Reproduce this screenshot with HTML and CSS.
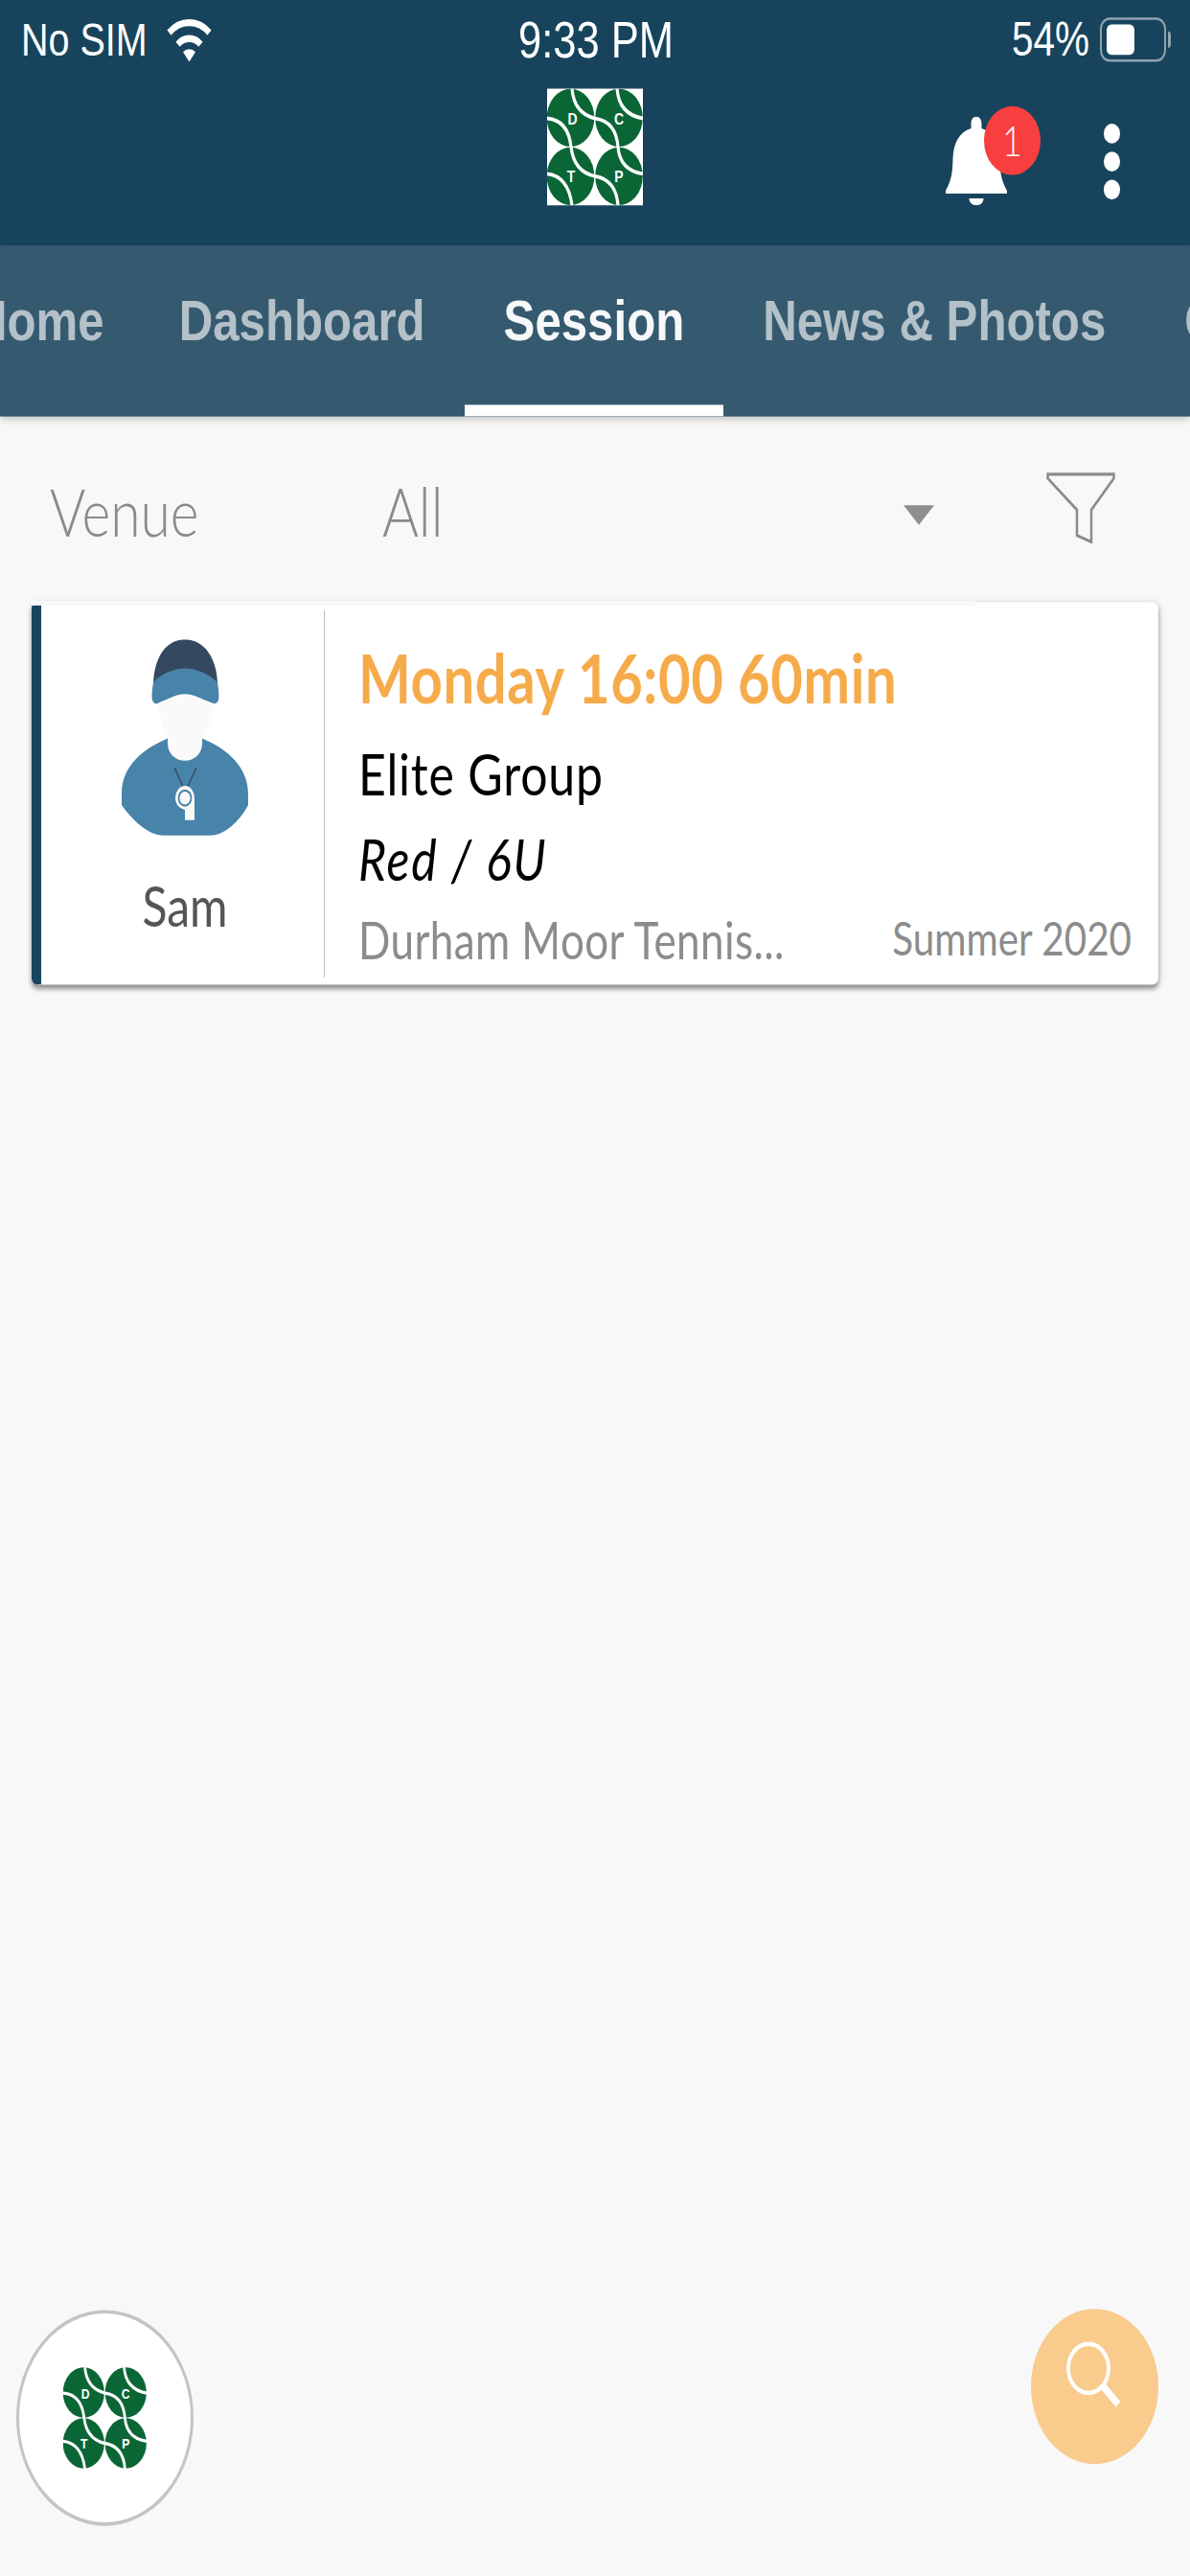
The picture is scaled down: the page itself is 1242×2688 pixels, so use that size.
FILE: index.html
```html
<!DOCTYPE html>
<html lang="en">
<head>
<meta charset="utf-8">
<title>Session</title>
<link rel="stylesheet" href="styles.css">
</head>
<body>
<div class="stage">
  <header class="appbar">
    <div class="status">
      <div class="status-left">
        <span>No SIM</span>
        <svg class="wifi" viewBox="0 0 49 37">
          <path d="M24.500 37L18 28.500A10 10 0 0 1 31 28.500Z" fill="#fff"/>
          <g fill="none" stroke="#fff" stroke-width="6">
            <path d="M12.500 22A17 17 0 0 1 36.500 22"/>
            <path d="M3.500 12A30 30 0 0 1 45.500 12"/>
          </g>
        </svg>
      </div>
      <div class="status-time">9:33 PM</div>
      <div class="status-right">
        <span>54%</span>
        <div class="battery"><div class="battery-fill"></div></div>
        <div class="battery-cap"></div>
      </div>
    </div>
    <div class="toolbar">
      <div></div>
      <svg class="logo" viewBox="0 0 100 100">
        <circle cx="24.500" cy="25" r="24.800" fill="#0b6636"/>
        <circle cx="75" cy="25" r="24.800" fill="#0b6636"/>
        <circle cx="24.500" cy="75" r="24.800" fill="#0b6636"/>
        <circle cx="75" cy="75" r="24.800" fill="#0b6636"/>
        <g fill="none" stroke="#fff" stroke-width="3.200">
          <path d="M26 0Q28 21 50 25.500Q72 28 74 50Q76 70 100 73"/>
          <path d="M0 25.500Q22 27 25 50Q28 71 50 75Q72 78 74 100"/>
          <path d="M73 0Q75 22 100 25.500"/>
          <path d="M0 73Q22 75 26 100"/>
        </g>
        <g class="logo-letters">
          <text x="26.500" y="31">D</text>
          <text x="75" y="31">C</text>
          <text x="25" y="80">T</text>
          <text x="75" y="80">P</text>
        </g>
      </svg>
      <div class="actions">
        <div class="bell-wrap">
          <svg class="bell" viewBox="0 0 64 76">
            <path fill="#fff" d="M32 0c3.500 0 5.500 2.800 5.500 6v4C50 13 56 23 56.500 36c.4 11 1 18 7.500 27.500V66H0v-2.500C6.500 54 7.100 47 7.500 36 8 23 14 13 26.500 10V6C26.500 2.800 28.500 0 32 0z"/>
            <path fill="#fff" d="M24.500 70h15c0 3.500-3.300 6-7.500 6s-7.500-2.500-7.500-6z"/>
          </svg>
          <div class="badge">1</div>
        </div>
        <div class="dots"><i></i><i></i><i></i></div>
      </div>
    </div>
  </header>

  <nav class="tabs">
    <a class="tab">Home</a>
    <a class="tab">Dashboard</a>
    <a class="tab tab-active">Session</a>
    <a class="tab">News &amp; Photos</a>
    <a class="tab">Coaches</a>
  </nav>

  <main class="content">
    <div class="filters">
      <span class="filter-label">Venue</span>
      <div class="filter-select">
        <span>All</span>
        <i class="caret"></i>
      </div>
      <svg class="funnel" viewBox="0 0 72 62" preserveAspectRatio="none">
        <path d="M1.500 2.500H70.500V6L47 33V60.500L32 55V33L1.500 6Z" fill="none" stroke="#8c8c8c" stroke-width="2.500"/>
      </svg>
    </div>

    <article class="card">
      <div class="coach">
        <svg class="avatar" viewBox="0 0 132 172">
          <path fill="#34495f" d="M33 40C33 16 46 0 66 0s34 16 34 40z"/>
          <path fill="#4883aa" d="M33 37C40 30 54 25 66 25s26 5 34 12c1 5 2 11 1 15-1 3-5 4-9 2-9-3-17-7-26-7s-17 4-26 7c-4 2-7 1-8-2-1-4 0-10 1-15z"/>
          <path fill="#fafafa" d="M38 55c10-3 19-7 28-7s18 4 30 7c-1 11-6 22-12 30v6c0 8-8 13-18 13s-18-5-18-13v-7c-5-9-9-19-10-29z"/>
          <path fill="#4883aa" d="M48 85v4c0 9 8 15 18 15s18-6 18-15v-4c26 9 48 24 48 48v9c-9 14-25 26-39 26H43C28 168 11 155 0 142v-10C0 109 22 94 48 85z"/>
          <path fill="none" stroke="#3b4f62" stroke-width="1.500" d="M55 110l9 16M78 110l-9 16"/>
          <path fill="#fafafa" d="M56 136a10 10.500 0 0 1 20 0v19H66v-9c-6-1-10-5-10-10z"/>
          <ellipse cx="66" cy="136" rx="6.500" ry="6.500" fill="#fafafa" stroke="#4883aa" stroke-width="1.800"/>
        </svg>
        <div class="coach-name">Sam</div>
      </div>
      <div class="details">
        <h2 class="title">Monday 16:00 60min</h2>
        <div class="group">Elite Group</div>
        <div class="level">Red / 6U</div>
        <div class="meta">
          <span class="venue">Durham Moor Tennis...</span>
          <span class="term">Summer 2020</span>
        </div>
      </div>
    </article>
  </main>

  <button class="fab-club" type="button">
    <svg class="fab-logo" viewBox="0 0 100 100">
      <circle cx="24.500" cy="25" r="24.800" fill="#0b6636"/>
      <circle cx="75" cy="25" r="24.800" fill="#0b6636"/>
      <circle cx="24.500" cy="75" r="24.800" fill="#0b6636"/>
      <circle cx="75" cy="75" r="24.800" fill="#0b6636"/>
      <g fill="none" stroke="#fff" stroke-width="3.200">
        <path d="M26 0Q28 21 50 25.500Q72 28 74 50Q76 70 100 73"/>
        <path d="M0 25.500Q22 27 25 50Q28 71 50 75Q72 78 74 100"/>
        <path d="M73 0Q75 22 100 25.500"/>
        <path d="M0 73Q22 75 26 100"/>
      </g>
      <g class="logo-letters">
        <text x="26.500" y="31">D</text>
        <text x="75" y="31">C</text>
        <text x="25" y="80">T</text>
        <text x="75" y="80">P</text>
      </g>
    </svg>
  </button>
  <button class="fab-search" type="button">
    <svg class="search" viewBox="0 0 58 58">
      <circle cx="23" cy="23" r="21" fill="none" stroke="#fff" stroke-width="3.800"/>
      <path d="M38 38L54 54" stroke="#fff" stroke-width="6.500"/>
    </svg>
  </button>
</div>
</body>
</html>
```

FILE: styles.css
```css
* { box-sizing: border-box; }

html, body {
  margin: 0;
  padding: 0;
  height: 100%;
  background: #f8f8f8;
  overflow: hidden;
}

/* The whole capture is stretched vertically: 1242x2208 up to 1242x2688 */
.stage {
  position: relative;
  width: 1242px;
  height: 2208px;
  background: #f8f8f8;
  transform: scaleY(1.2174);
  transform-origin: top left;
  font-family: "Lato", "Liberation Sans", sans-serif;
  overflow: hidden;
}

/* App bar */
.appbar {
  background: #17445c;
  height: 211px;
  color: #fff;
  font-family: "Liberation Sans", Arial, sans-serif;
}

.status {
  display: grid;
  grid-template-columns: 1fr auto 1fr;
  align-items: center;
  height: 68px;
  padding: 0 20px 0 22px;
  font-size: 39.500px;
}

.status-left { display: flex; align-items: center; gap: 19px; }
.status-time { font-size: 43.500px; }
.status-right { display: flex; align-items: center; justify-content: flex-end; font-size: 40.500px; }

.wifi { width: 49px; height: 37px; }

.battery {
  width: 69px;
  height: 38px;
  margin-left: 11px;
  padding: 4px 5px;
  border: 2px solid #8ea3af;
  border-radius: 10px;
}

.battery-fill { width: 29px; height: 100%; background: #fff; border-radius: 5px; }

.battery-cap {
  width: 3px;
  height: 14px;
  margin-left: 2px;
  background: #8ea3af;
  border-radius: 0 3px 3px 0;
}

.toolbar {
  display: grid;
  grid-template-columns: 1fr 100px 1fr;
  align-items: start;
  padding-top: 8px;
}

.logo { display: block; width: 100px; height: 100px; background: #fff; }
.logo-letters { fill: #fff; font: 700 14px "Liberation Sans", Arial, sans-serif; text-anchor: middle; }

.actions {
  display: flex;
  justify-content: flex-end;
  align-items: flex-start;
  gap: 66px;
  padding-right: 73px;
}

.bell-wrap { position: relative; width: 99px; height: 84px; margin-top: 15px; }
.bell { position: absolute; left: 0; top: 8.500px; width: 64px; height: 76px; }

.badge {
  position: absolute;
  right: 0;
  top: 0;
  width: 59px;
  height: 59px;
  border-radius: 50%;
  background: #f73f3f;
  color: #fff;
  font: 300 36px/59px "Lato", sans-serif;
  text-align: center;
}

.dots { display: flex; flex-direction: column; gap: 7.500px; padding-top: 30px; }
.dots i { display: block; width: 17px; height: 16.500px; border-radius: 50%; background: #fff; }

/* Tabs */
.tabs {
  position: relative;
  z-index: 2;
  display: flex;
  height: 146px;
  background: #355a70;
  box-shadow: 0 3px 7px rgba(0, 0, 0, .22);
  overflow: hidden;
  font: 700 49.200px/1 "Liberation Sans", Arial, sans-serif;
  color: #b4c1c8;
}

.tab {
  flex: none;
  display: block;
  padding: 38.500px 41px 0;
  height: 146px;
  white-space: nowrap;
}

.tab:first-child { margin-left: -69px; padding-right: 37px; }

.tab-active {
  color: #f6f8f9;
  border-bottom: 10px solid #fff;
}

/* Filter row */
.filters {
  display: flex;
  align-items: flex-start;
  height: 159px;
  padding-left: 52px;
  color: #8a8a8a;
  font-weight: 300;
  line-height: 66px;
}

.filter-label { width: 347px; padding-top: 48px; font-size: 57px; }

.filter-select {
  display: flex;
  align-items: flex-start;
  justify-content: space-between;
  width: 576px;
  padding-top: 48px;
  font-size: 58px;
}

.caret {
  width: 0;
  height: 0;
  margin-top: 28px;
  border-left: 16px solid transparent;
  border-right: 16px solid transparent;
  border-top: 17px solid #8f8f8f;
}

.funnel { width: 72px; height: 62px; margin: 47px 0 0 117px; }

/* Session card */
.card {
  position: relative;
  display: flex;
  width: 1176px;
  height: 328px;
  margin-left: 33px;
  border-left: 10px solid #17445c;
  border-radius: 6px;
  background: #fff;
  box-shadow: 0 3px 5px rgba(0, 0, 0, .4), 2px 0 8px rgba(0, 0, 0, .08);
}

.card::before {
  content: "";
  position: absolute;
  left: -10px;
  top: -1px;
  width: 985px;
  height: 4px;
  background: #f8f8f8;
}

.coach {
  display: flex;
  flex-direction: column;
  align-items: center;
  flex: none;
  width: 296px;
  height: 315px;
  margin-top: 7px;
  padding: 25px 0 0 5px;
  border-right: 1.500px solid #bdbdbd;
}

.avatar { display: block; flex: none; width: 132px; height: 172px; }

.coach-name {
  margin-top: 28px;
  color: #555;
  font-size: 48px;
  line-height: 56px;
}

.details {
  flex: 1;
  min-width: 0;
  padding: 0 28px 0 35px;
}

.title {
  margin: 32px 0 0;
  color: #f6ab4b;
  font-size: 58px;
  font-weight: 700;
  letter-spacing: .6px;
  line-height: 66px;
}

.group {
  margin-top: 20px;
  color: #000;
  font-size: 50px;
  letter-spacing: .8px;
  line-height: 58px;
}

.level {
  margin-top: 15px;
  color: #000;
  font-size: 50px;
  font-style: italic;
  letter-spacing: 1.800px;
  line-height: 58px;
}

.meta {
  display: flex;
  justify-content: space-between;
  align-items: flex-start;
  margin-top: 13.500px;
  color: #8c8c8c;
  font-size: 44px;
  letter-spacing: .4px;
  line-height: 52px;
}

.term { font-size: 40.400px; letter-spacing: 0; line-height: 50px; }

/* Floating buttons */
.fab-club {
  position: absolute;
  left: 17px;
  bottom: 43px;
  display: flex;
  align-items: center;
  justify-content: center;
  width: 185px;
  height: 185px;
  padding: 0;
  border: 3px solid #c4c4c4;
  border-radius: 50%;
  background: #fff;
}

.fab-logo { width: 87px; height: 87px; }

.fab-search {
  position: absolute;
  right: 33px;
  bottom: 96px;
  width: 133px;
  height: 133px;
  padding: 0;
  border: 0;
  border-radius: 50%;
  background: #f9cb8d;
}

.search { position: absolute; left: 37px; top: 27.500px; width: 58px; height: 58px; }
```
